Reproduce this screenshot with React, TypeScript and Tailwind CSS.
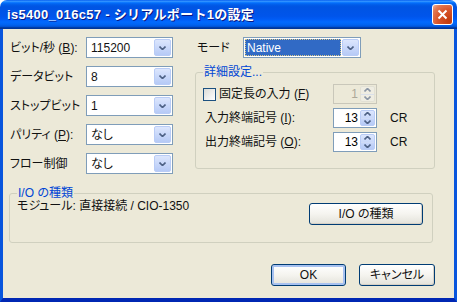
import React from 'react';

const font = "font-['Liberation_Sans','Noto_Sans_CJK_JP',sans-serif] [font-feature-settings:'palt']";

function Chevron({ up }: { up?: boolean }) {
  return (
    <svg width="7" height="4" viewBox="0 0 7 4">
      <path
        d={up ? 'M0.5 3.5 L3.5 0.5 L6.5 3.5' : 'M0.5 0.5 L3.5 3.5 L6.5 0.5'}
        fill="none"
        stroke="#4D6185"
        strokeWidth="1.6"
      />
    </svg>
  );
}

function DropBtn() {
  return (
    <div className="flex h-[17px] w-[17px] items-center justify-center rounded-[2px] border border-[#B9CCF6] bg-gradient-to-b from-[#DCE6FD] to-[#B6CAF6]">
      <Chevron />
    </div>
  );
}

function Combo({ value, width, selected }: { value: string; width: string; selected?: boolean }) {
  return (
    <div className={`flex h-[21px] items-center gap-[1px] border border-[#7F9DB9] bg-white p-[1px] ${width}`}>
      {selected ? (
        <div className="flex h-full flex-1 items-center border border-dotted border-[#D7C88A] bg-[#316AC5] pl-[1px] text-white">
          {value}
        </div>
      ) : (
        <div className="flex-1 pl-[3px]">{value}</div>
      )}
      <DropBtn />
    </div>
  );
}

function Spin({ value, disabled }: { value: string; disabled?: boolean }) {
  return (
    <div
      className={`flex h-[20px] w-[44px] border p-[1px] ${
        disabled ? 'border-[#C9C7BA] bg-[#ECE9D8] text-[#ACA899]' : 'border-[#7F9DB9] bg-white text-black'
      }`}
    >
      <div className="flex flex-1 items-center justify-end pr-[2px]">{value}</div>
      <div
        className={`flex w-[15px] flex-col rounded-[2px] border ${
          disabled ? 'border-[#DCDBD3] bg-[#F1F0EA] opacity-60' : 'border-[#B9CCF6] bg-gradient-to-b from-[#DCE6FD] to-[#B6CAF6]'
        }`}
      >
        <div className="flex flex-1 items-center justify-center border-b border-[#CFDBF7]">
          <Chevron up />
        </div>
        <div className="flex flex-1 items-center justify-center">
          <Chevron />
        </div>
      </div>
    </div>
  );
}

function Btn({ label, width, isDefault }: { label: string; width: string; isDefault?: boolean }) {
  return (
    <div
      className={`flex h-[22px] items-center justify-center rounded-[3px] border border-[#003C74] bg-gradient-to-b from-white via-[#F5F4EF] to-[#E3E2DA] ${width} ${
        isDefault ? 'shadow-[inset_0_0_0_2px_#A7C1F0]' : 'shadow-[inset_-1px_-1px_0_#D6D0C5]'
      }`}
    >
      {label}
    </div>
  );
}

function Row({ label, value }: { label: React.ReactNode; value: string }) {
  return (
    <div className="flex h-[21px] items-center">
      <div className="w-[76px]">{label}</div>
      <Combo value={value} width="w-[87px]" />
    </div>
  );
}

export default function App() {
  return (
    <div className={`flex h-[302px] w-[457px] flex-col text-[12px] leading-[14px] text-[#111] ${font}`}>
      {/* タイトルバー */}
      <div className="flex h-[29px] items-center justify-between rounded-t-[7px] bg-[linear-gradient(180deg,#0058EE_0%,#3593FF_4%,#288EFF_6%,#127DFF_8%,#036FFC_10%,#0262EE_14%,#0057E5_20%,#0054E3_24%,#0055EB_56%,#005BF5_66%,#026AFE_76%,#0062EF_86%,#0052D6_92%,#0040AB_94%,#003092_100%)] pl-[7px] pr-[4px]">
        <span className="text-[13px] font-bold tracking-[0.3px] text-white [font-feature-settings:normal] [text-shadow:1px_1px_#0A1883]">
          is5400_016c57 - シリアルポート1の設定
        </span>
        <div className="flex h-[21px] w-[21px] items-center justify-center rounded-[3px] border border-white bg-[radial-gradient(circle_at_85%_85%,#C13A0C_0%,#D8542A_50%,#E27A55_80%,#F3B49B_100%)]">
          <svg width="11" height="11" viewBox="0 0 11 11">
            <path d="M1.5 1.5 L9.5 9.5 M9.5 1.5 L1.5 9.5" stroke="white" strokeWidth="2" />
          </svg>
        </div>
      </div>

      {/* 本体 */}
      <div className="flex flex-1 flex-col border-x-[3px] border-b-[4px] border-x-[#0855DD] border-b-[#0027B3] bg-[#ECE9D8]">
        <div className="ml-[7px] mt-[8px] flex">
          <div className="flex w-[163px] flex-col gap-[8px]">
            <Row label={<>ビット/秒 (<u>B</u>):</>} value="115200" />
            <Row label="データビット" value="8" />
            <Row label="ストップビット" value="1" />
            <Row label={<>パリティ (<u>P</u>):</>} value="なし" />
            <Row label="フロー制御" value="なし" />
          </div>

          <div className="ml-[22px] flex w-[240px] flex-col">
            <div className="flex h-[21px] items-center pl-[2px]">
              <div className="w-[46px]">モード</div>
              <Combo value="Native" width="w-[118px]" selected />
            </div>

            {/* 詳細設定 */}
            <div className="relative mt-[14px] h-[97px] rounded-[3px] border border-[#D0D0BF] pt-[11px]">
              <span className="absolute -top-[8px] left-[7px] bg-[#ECE9D8] px-[1px] text-[#0046D5]">詳細設定...</span>
              <div className="flex flex-col gap-[4px]">
                <div className="flex h-[20px] items-center pl-[7px]">
                  <div className="h-[13px] w-[13px] border border-[#1C5180] bg-gradient-to-br from-[#DCDCD7] to-white" />
                  <div className="ml-[3px] w-[114px]">
                    固定長の入力 (<u>F</u>)
                  </div>
                  <Spin value="1" disabled />
                </div>
                <div className="flex h-[20px] items-center pl-[9px]">
                  <div className="w-[128px]">
                    入力終端記号 (<u>I</u>):
                  </div>
                  <Spin value="13" />
                  <span className="ml-[13px]">CR</span>
                </div>
                <div className="flex h-[20px] items-center pl-[9px]">
                  <div className="w-[128px]">
                    出力終端記号 (<u>O</u>):
                  </div>
                  <Spin value="13" />
                  <span className="ml-[13px]">CR</span>
                </div>
              </div>
            </div>
          </div>
        </div>

        {/* I/O の種類 */}
        <div className="relative ml-[6px] mt-[19px] flex h-[50px] w-[424px] items-start justify-between rounded-[3px] border border-[#D0D0BF] pl-[7px] pr-[9px] pt-[5px]">
          <span className="absolute -top-[8px] left-[7px] bg-[#ECE9D8] px-[1px] text-[#0046D5]">I/O の種類</span>
          <span>モジュール: 直接接続 / CIO-1350</span>
          <div className="mt-[4px]">
            <Btn label="I/O の種類" width="w-[114px]" />
          </div>
        </div>

        <div className="mt-[21px] flex justify-end gap-[13px] pr-[19px]">
          <Btn label="OK" width="w-[75px]" isDefault />
          <Btn label="キャンセル" width="w-[76px]" />
        </div>
      </div>
    </div>
  );
}
